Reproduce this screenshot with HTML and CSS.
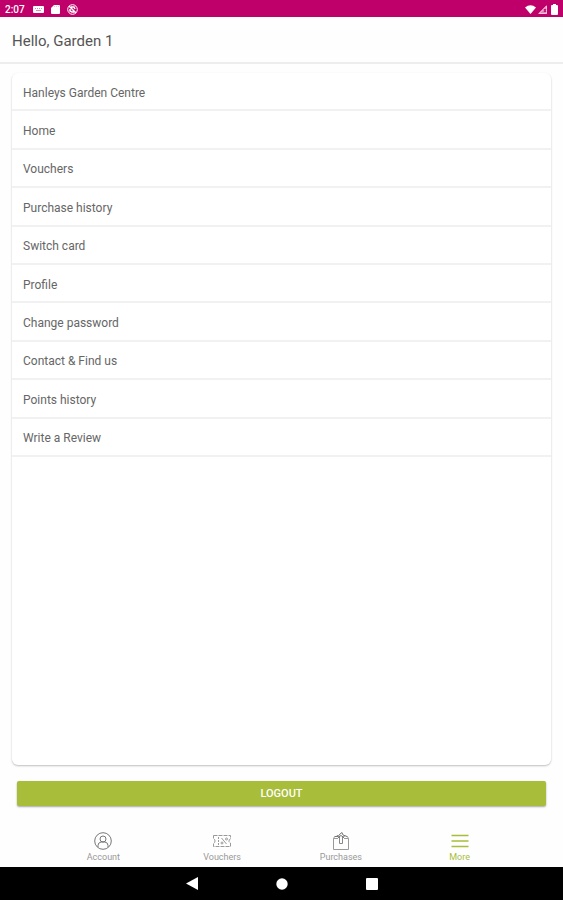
FILE: index.html
```html
<!DOCTYPE html>
<html lang="en">
<head>
    <meta charset="UTF-8">
    <meta name="viewport" content="width=device-width, initial-scale=1.0">
    <title>Hanleys Garden Centre</title>
    <link rel="stylesheet" href="styles.css">
</head>
<body>
    <div class="status-bar">
        <span class="clock">2:07</span>
        <svg class="status-icon" width="11" height="11" viewBox="0 0 11 11">
            <rect x="0" y="2" width="11" height="7" rx="1" fill="#fff"/>
            <path d="M2 4.500h7" stroke="#e08ab8" stroke-dasharray="1 1"/>
            <path d="M3 6.500h5" stroke="#e08ab8"/>
        </svg>
        <svg class="status-icon" width="11" height="11" viewBox="0 0 11 11">
            <path d="M4 1h5a1 1 0 0 1 1 1v7a1 1 0 0 1-1 1H2a1 1 0 0 1-1-1V4z" fill="#fff"/>
            <path d="M4.500 2v1M6.500 2v1M8.500 2v1" stroke="#f0bfd8"/>
        </svg>
        <svg class="status-icon" width="11" height="11" viewBox="0 0 11 11" fill="none" stroke="#fff">
            <circle cx="5.500" cy="5.500" r="4.800"/>
            <path d="M2 2l7 7M4 3h3l1 2M3 5v2l2 1h2" stroke-width="1.500"/>
        </svg>
        <div class="status-right">
            <svg width="11" height="11" viewBox="0 0 11 11">
                <path d="M0 3.500Q5.500-.800 11 3.500L5.500 10z" fill="#fff"/>
            </svg>
            <svg width="11" height="11" viewBox="0 0 11 11">
                <path d="M10 1v9H1z" fill="#e48abb"/>
                <path d="M9.500 2v7.500H2z" fill="none" stroke="#f3c4dc"/>
                <path d="M7 5l2 3M9 5L7 8" stroke="#c0006a"/>
            </svg>
            <svg width="11" height="11" viewBox="0 0 11 11">
                <path d="M4 0h3v1h1a1 1 0 0 1 1 1v8a1 1 0 0 1-1 1H3a1 1 0 0 1-1-1V2a1 1 0 0 1 1-1h1z" fill="#fff"/>
            </svg>
        </div>
    </div>

    <header class="app-bar">
        <h1>Hello, Garden 1</h1>
    </header>

    <main class="content">
        <div class="card">
            <ul class="menu">
                <li><a href="#">Hanleys Garden Centre</a></li>
                <li><a href="#">Home</a></li>
                <li><a href="#">Vouchers</a></li>
                <li><a href="#">Purchase history</a></li>
                <li><a href="#">Switch card</a></li>
                <li><a href="#">Profile</a></li>
                <li><a href="#">Change password</a></li>
                <li><a href="#">Contact &amp; Find us</a></li>
                <li><a href="#">Points history</a></li>
                <li><a href="#">Write a Review</a></li>
            </ul>
        </div>
        <button class="logout-btn" type="button">LOGOUT</button>
    </main>

    <nav class="tabs">
        <a class="tab" href="#">
            <svg width="18" height="18" viewBox="0 0 18 18" fill="none" stroke="#777">
                <circle cx="9" cy="9" r="8.300"/>
                <circle cx="9" cy="7" r="3"/>
                <path d="M4 15v-1.500q0-3 3-3.500h4q3 .500 3 3.500V15"/>
            </svg>
            <span>Account</span>
        </a>
        <a class="tab" href="#">
            <svg width="18" height="18" viewBox="0 0 18 18" fill="none" stroke="#999">
                <path d="M.500 3.500h17v3.500q-1.500 0-1.500 2t1.500 2v3.500H.500V11Q2 11 2 9T.500 7z" stroke-dasharray="4 1"/>
                <path d="M5.500 5v8" stroke-dasharray="2 1"/>
                <path d="M8.500 6l5 6"/>
                <circle cx="9" cy="11" r="1"/>
                <circle cx="13.500" cy="7" r="1"/>
            </svg>
            <span>Vouchers</span>
        </a>
        <a class="tab" href="#">
            <svg width="18" height="18" viewBox="0 0 18 18" fill="none" stroke="#999">
                <path d="M1.500 6.500v11h15v-11M1.500 6.500L3 4M16.500 6.500L15 4M1.500 6.500H6M12 6.500h4.500"/>
                <path d="M7.500 11.500V5M10.500 11.500V5M7.500 11.500h3" stroke="#888"/>
                <path d="M3 4.500h3L8 2l2-1.500L11 3l4 1.500M6 5.500l3-2 3 2M5 3l2 3M13 3l-2 3" stroke="#777"/>
            </svg>
            <span>Purchases</span>
        </a>
        <a class="tab active" href="#">
            <svg width="18" height="18" viewBox="0 0 18 18" stroke="#a8bd3a" stroke-width="1.500">
                <path d="M.500 3.500h17M.500 9h17M.500 14.500h17"/>
            </svg>
            <span>More</span>
        </a>
    </nav>

    <div class="system-bar">
        <button type="button" aria-label="Back">
            <svg width="12" height="13" viewBox="0 0 12 13"><path d="M12 0v13L0 6.500z" fill="#fff"/></svg>
        </button>
        <button type="button" aria-label="Home">
            <svg width="12" height="12" viewBox="0 0 12 12"><circle cx="6" cy="6" r="5.700" fill="#fff"/></svg>
        </button>
        <button type="button" aria-label="Overview">
            <svg width="12" height="12" viewBox="0 0 12 12"><rect width="12" height="12" rx="1" fill="#fff"/></svg>
        </button>
    </div>
</body>
</html>
```
FILE: styles.css
```css
* {
    box-sizing: border-box;
}
body {
    font-family: Roboto, "Liberation Sans", sans-serif;
    background-color: #fefefe;
    color: #666;
    display: flex;
    flex-direction: column;
    min-height: 100vh;
    margin: 0;
}
svg {
    display: block;
}
a {
    color: inherit;
    text-decoration: none;
}

/* Android status bar */
.status-bar {
    display: flex;
    align-items: center;
    height: 17px;
    padding: 1px 3px 0 5px;
    background-color: #c0006a;
    color: #fff;
}
.clock {
    font-size: 10px;
    font-weight: 500;
    margin-right: 2px;
}
.status-icon {
    margin-left: 6px;
}
.status-right {
    display: flex;
    gap: 1px;
    margin-left: auto;
}

.app-bar {
    display: flex;
    align-items: center;
    height: 47px;
    padding: 2px 12px 0;
    border-bottom: 2px solid #ededed;
}
.app-bar h1 {
    margin: 0;
    font-size: 15px;
    font-weight: 400;
    color: #555;
}

.content {
    flex: 1;
    display: flex;
    flex-direction: column;
    padding: 9px 12px 24px;
}
.card {
    flex: 1;
    border-radius: 6px;
    background-color: #fff;
    box-shadow: 0 1px 2px rgba(0, 0, 0, 0.25);
}
.menu {
    display: grid;
    grid-auto-rows: 1fr;
    min-height: 384px;
    margin: 0;
    padding: 0;
    list-style: none;
}
.menu a {
    display: flex;
    align-items: center;
    height: 100%;
    padding: 3px 11px 0;
    border-bottom: 2px solid #f1f1f1;
    font-size: 12px;
}
.logout-btn {
    height: 25px;
    margin: 16px 5px 0;
    border: none;
    border-radius: 2px;
    background-color: #a8bd3a;
    box-shadow: 0 1px 2px rgba(0, 0, 0, 0.35);
    color: #fff;
    font-family: inherit;
    font-size: 11px;
    font-weight: 500;
    cursor: pointer;
}

/* Bottom navigation */
.tabs {
    display: flex;
    justify-content: center;
    height: 37px;
    padding: 0 44px;
}
.tab {
    flex: 1;
    display: flex;
    flex-direction: column;
    align-items: center;
    gap: 2px;
    padding-top: 2px;
    font-size: 9px;
    line-height: 10px;
    color: #999;
}
.tab.active {
    color: #a8bd3a;
}

.system-bar {
    display: flex;
    justify-content: center;
    align-items: center;
    gap: 78px;
    height: 33px;
    background-color: #000;
}
.system-bar button {
    padding: 0;
    border: none;
    background: none;
}
```
